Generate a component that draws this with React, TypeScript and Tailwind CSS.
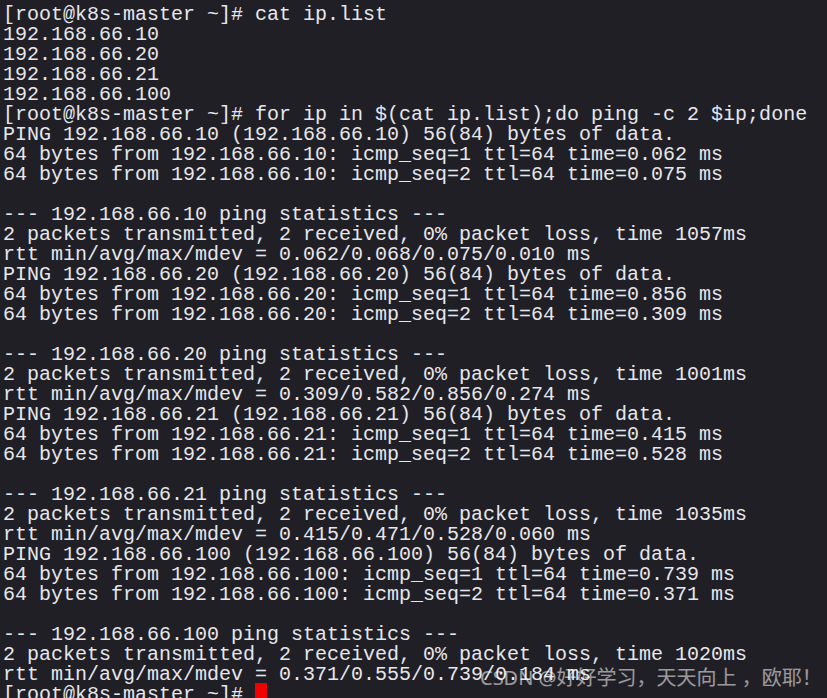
const lines: string[] = [
  "[root@k8s-master ~]# cat ip.list",
  "192.168.66.10",
  "192.168.66.20",
  "192.168.66.21",
  "192.168.66.100",
  "[root@k8s-master ~]# for ip in $(cat ip.list);do ping -c 2 $ip;done",
  "PING 192.168.66.10 (192.168.66.10) 56(84) bytes of data.",
  "64 bytes from 192.168.66.10: icmp_seq=1 ttl=64 time=0.062 ms",
  "64 bytes from 192.168.66.10: icmp_seq=2 ttl=64 time=0.075 ms",
  "",
  "--- 192.168.66.10 ping statistics ---",
  "2 packets transmitted, 2 received, 0% packet loss, time 1057ms",
  "rtt min/avg/max/mdev = 0.062/0.068/0.075/0.010 ms",
  "PING 192.168.66.20 (192.168.66.20) 56(84) bytes of data.",
  "64 bytes from 192.168.66.20: icmp_seq=1 ttl=64 time=0.856 ms",
  "64 bytes from 192.168.66.20: icmp_seq=2 ttl=64 time=0.309 ms",
  "",
  "--- 192.168.66.20 ping statistics ---",
  "2 packets transmitted, 2 received, 0% packet loss, time 1001ms",
  "rtt min/avg/max/mdev = 0.309/0.582/0.856/0.274 ms",
  "PING 192.168.66.21 (192.168.66.21) 56(84) bytes of data.",
  "64 bytes from 192.168.66.21: icmp_seq=1 ttl=64 time=0.415 ms",
  "64 bytes from 192.168.66.21: icmp_seq=2 ttl=64 time=0.528 ms",
  "",
  "--- 192.168.66.21 ping statistics ---",
  "2 packets transmitted, 2 received, 0% packet loss, time 1035ms",
  "rtt min/avg/max/mdev = 0.415/0.471/0.528/0.060 ms",
  "PING 192.168.66.100 (192.168.66.100) 56(84) bytes of data.",
  "64 bytes from 192.168.66.100: icmp_seq=1 ttl=64 time=0.739 ms",
  "64 bytes from 192.168.66.100: icmp_seq=2 ttl=64 time=0.371 ms",
  "",
  "--- 192.168.66.100 ping statistics ---",
  "2 packets transmitted, 2 received, 0% packet loss, time 1020ms",
  "rtt min/avg/max/mdev = 0.371/0.555/0.739/0.184 ms",
];

export default function App() {
  return (
    <div className="relative w-[827px] h-[698px] overflow-hidden bg-[#211f26]">
      <div className="pt-[5px] pl-[3px] font-['Liberation_Mono',monospace] text-[20px] leading-[20px] text-[#e4e7ee] whitespace-pre">
        {lines.map((line, i) => (
          <div key={i} className="h-[20px]">
            {line}
          </div>
        ))}
        {/* prompt with cursor */}
        <div className="h-[20px] flex items-start">
          <span>[root@k8s-master ~]# </span>
          <span className="inline-block w-[12px] h-[18px] -mt-[2px] bg-[#f00000]" />
        </div>
      </div>

      {/* watermark */}
      <div className="absolute left-[480px] top-[665px] font-['Noto_Sans','Noto_Sans_CJK_SC',sans-serif] text-[20px] leading-[26px] text-white/55 whitespace-pre">
        CSDN @好好学习，天天向上 ，欧耶！
      </div>
    </div>
  );
}
